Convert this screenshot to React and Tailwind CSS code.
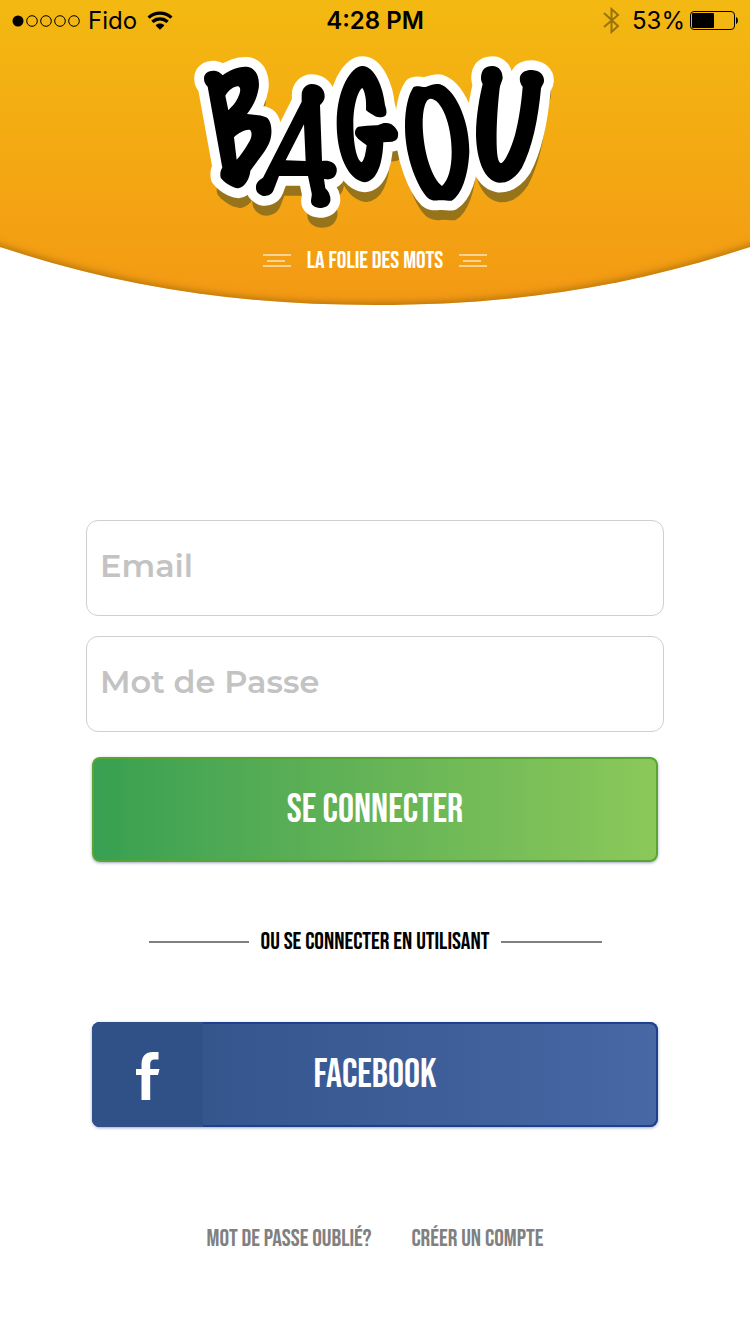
import React from "react";

const condensed =
  "font-['Bebas_Neue','Roboto_Condensed','Liberation_Sans_Narrow','Liberation_Sans',sans-serif]";

function StatusBar() {
  return (
    <div className="grid w-full grid-cols-3 items-center px-3 pt-px text-2xl leading-10 text-black font-[Inter,sans-serif]">
      <div className="flex items-center gap-2">
        <svg width="68" height="12" viewBox="0 0 68 12" aria-hidden="true">
          <circle cx="6" cy="6" r="5.5" />
          <g fill="none" stroke="#000" strokeWidth="1">
            <circle cx="20" cy="6" r="5.3" />
            <circle cx="34" cy="6" r="5.3" />
            <circle cx="48" cy="6" r="5.3" />
            <circle cx="62" cy="6" r="5.3" />
          </g>
        </svg>
        <span>Fido</span>
        <svg className="ml-0.5" width="26" height="20" viewBox="0 0 26 20" aria-hidden="true">
          <g fill="none" stroke="#000" strokeWidth="3.2">
            <path d="M1.6 6.6C8 .6 18 .6 24.400 6.600" />
            <path d="M5.400 10.900C9.800 6.900 16.200 6.900 20.600 10.900" />
          </g>
          <path d="M8.600 14.400C11 12 15 12 17.400 14.400L13 18.800Z" />
        </svg>
      </div>
      <div className="text-center font-semibold">4:28 PM</div>
      <div className="flex items-center justify-end">
        <svg className="mr-3" width="17" height="28" viewBox="0 0 17 28" fill="none" stroke="#98730c" strokeWidth="2" aria-hidden="true">
          <path d="M1 6L15 19L8.500 25V2L15 8L1 20" />
        </svg>
        <span>53%</span>
        <svg className="ml-1" width="49" height="20" viewBox="0 0 49 20" aria-hidden="true">
          <rect x="1.5" y=".5" width="44" height="18" rx="3.500" fill="none" stroke="#000" strokeWidth="1" />
          <rect x="3" y="2" width="22" height="15" rx="1" />
          <path d="M47 6C49.500 6.500 49.500 12.500 47 13Z" />
        </svg>
      </div>
    </div>
  );
}

function Logo() {
  return (
    <svg className="w-[380px] max-w-full" viewBox="0 0 1140 570" role="img" aria-label="Bagou">
      <defs>
        <g id="bagou" strokeLinejoin="round">
          <path d="M57 100C57 85 70 76 88 77C102 79 109 86 113 91C135 74 165 62 190 66C215 72 225 100 221 130C215 165 200 190 186 207C215 210 238 211 248 220C262 235 262 270 254 290C243 320 210 355 196 378C194 400 180 427 160 430C140 428 115 410 107 398C104 385 107 375 112 368L68 125C60 118 57 110 57 100ZM121 152C130 135 150 122 160 124C170 130 165 145 158 160C148 180 135 190 130 196ZM147 277C160 265 180 252 195 255C203 262 200 280 190 295C178 315 165 335 155 344Z" />
          <path d="M350 150C350 130 365 117 380 117C405 117 420 135 419 155C418 168 410 175 405 180L411 348C430 345 450 350 455 370C458 390 445 405 425 403L417 402L421 430C432 440 438 455 436 468C432 483 420 489 405 489C388 488 378 480 378 468C379 455 382 450 379 440L369 393L282 393L266 435C260 450 245 455 232 452C215 445 212 435 213 423C215 410 225 403 234 398L350 170ZM357 238L302 346L362 348Z" />
          <path d="M532 63C500 63 455 130 455 235C455 330 490 405 538 412C570 410 592 370 595 292L622 290C637 287 641 278 639 262C632 245 620 235 605 234C590 233 585 240 575 241C555 242 535 243 520 245C510 250 508 262 512 272C520 285 535 292 545 301C542 325 538 345 530 352C515 345 505 300 505 235C505 180 520 135 532 129C540 140 545 165 543 195C548 202 560 205 570 214C580 219 597 218 603 210C607 200 603 190 600 180C595 130 570 63 532 63Z" />
          <path d="M685 127C695 120 712 127 722 126C735 122 750 114 765 118C805 130 853 215 853 320C850 390 830 450 800 467C790 468 775 464 760 466C745 468 735 464 728 458C700 430 660 340 660 245C660 190 670 150 685 127ZM735 161C722 163 713 190 713 240C715 320 740 400 771 423C790 405 800 370 800 320C800 240 770 160 735 161Z" />
          <path d="M888 100C888 75 900 63 922 63C942 64 953 78 953 100C951 110 946 117 944 130C936 200 934 260 935 300C936 335 940 352 948 355C958 352 975 320 990 270C1003 220 1010 165 1013 125C1006 118 1003 105 1005 95C1010 80 1025 74 1042 75C1065 77 1078 90 1077 108C1077 117 1070 122 1068 130C1060 220 1042 310 1010 370C990 400 970 414 942 413C900 408 875 350 873 270C873 210 885 150 893 117C889 110 888 105 888 100Z" />
        </g>
      </defs>
      <use href="#bagou" x="5" y="43" fill="#97731a" stroke="#97731a" strokeWidth="32" />
      <use href="#bagou" fill="#fff" stroke="#fff" strokeWidth="59" />
      <path d="M700 150H780L830 300L770 440L705 300ZM930 120L980 100L1025 130L1000 300L940 370Z" fill="#fff" />
      <use href="#bagou" fill="#000" fillRule="evenodd" />
    </svg>
  );
}

function HeaderShape() {
  return (
    <svg className="absolute inset-0 -z-10 h-full w-full" viewBox="0 0 750 305" preserveAspectRatio="none" aria-hidden="true">
      <defs>
        <linearGradient id="sun" x1="0" y1="0" x2="0" y2="1">
          <stop offset="0" stopColor="#f3b911" />
          <stop offset="1" stopColor="#f39914" />
        </linearGradient>
        <clipPath id="bowl">
          <path d="M0 0H750V247C625 288 510 305 375 305S125 288 0 247Z" />
        </clipPath>
        <filter id="soft" x="-10%" y="-50%" width="120%" height="200%">
          <feGaussianBlur stdDeviation="4" />
        </filter>
      </defs>
      <g clipPath="url(#bowl)">
        <rect width="750" height="305" fill="url(#sun)" />
        <path d="M-30 238L0 247C125 288 240 305 375 305S625 288 750 247L780 238" transform="translate(0 3)" fill="none" stroke="#8a5a08" strokeOpacity="0.75" strokeWidth="8" filter="url(#soft)" />
      </g>
    </svg>
  );
}

function Flourish() {
  return (
    <svg width="28" height="14" viewBox="0 0 28 14" stroke="#fff" strokeOpacity="0.55" strokeWidth="2" aria-hidden="true">
      <path d="M0 1H28M4 7H22M0 12H28" />
    </svg>
  );
}

function Field({ id, label, type }) {
  return (
    <input
      id={id}
      type={type}
      aria-label={label}
      placeholder={label}
      className="h-24 w-full rounded-xl border border-[#cfcfcf] bg-white px-[13px] pb-1.5 text-[32px] font-semibold text-gray-700 outline-none placeholder:text-[#c3c3c3] font-[Montserrat,Inter,sans-serif]"
    />
  );
}

export default function App() {
  return (
    <div className={`min-h-screen bg-white ${condensed}`}>
      <header className="relative isolate flex h-[305px] flex-col items-center">
        <HeaderShape />
        <StatusBar />
        <div className="mt-1 flex h-[190px] max-w-full justify-center">
          <Logo />
        </div>
        <div className="mt-2.5 flex items-center gap-4 text-2xl leading-8 text-white">
          <Flourish />
          <p>LA FOLIE DES MOTS</p>
          <Flourish />
        </div>
      </header>

      <main className="mx-auto flex w-full max-w-[626px] flex-col items-center px-6 pt-[215px] pb-16">
        <form className="flex w-full flex-col gap-5" onSubmit={(e) => e.preventDefault()}>
          <Field id="email" label="Email" type="email" />
          <Field id="password" label="Mot de Passe" type="password" />
          <div className="mt-[5px] px-1.5">
            <button
              type="submit"
              className="h-[105px] w-full rounded-lg border-2 border-[#5aa52f] bg-linear-to-r from-[#37a052] to-[#8bc85a] text-[40px] text-white shadow-[0_1px_3px_rgba(60,80,150,0.5)]"
            >
              SE CONNECTER
            </button>
          </div>
        </form>

        <div className="mt-16 flex w-full max-w-[453px] items-center gap-3 text-2xl leading-8 text-black">
          <span className="h-0.5 flex-1 bg-[#808080]" />
          <p>OU SE CONNECTER EN UTILISANT</p>
          <span className="h-0.5 flex-1 bg-[#808080]" />
        </div>

        <div className="mt-16 w-full px-1.5">
          <button
            type="button"
            className="relative flex h-[105px] w-full items-center justify-center overflow-hidden rounded-lg bg-linear-to-r from-[#305187] to-[#4767a5] text-[40px] text-white shadow-[inset_0_0_0_2px_#1d418f,0_1px_3px_rgba(60,80,150,0.5)]"
          >
            <span className="absolute inset-y-0 left-0 flex w-[111px] items-center justify-center bg-[#305187] pt-0.5">
              <svg width="24" height="48" viewBox="0 0 24 48" fill="#fff" aria-hidden="true">
                <path d="M5.500 48V23H0V17H5.500V13C5.500 4 9.500 0 17 0H22.500V7.500H19C15.500 7.500 14.200 9 14.200 13V17H23.500L22 23H14.200V48Z" />
              </svg>
            </span>
            FACEBOOK
          </button>
        </div>

        <nav className="mt-24 flex gap-10 text-2xl leading-8 text-[#808080]">
          <a href="#oublie">MOT DE PASSE OUBLIÉ?</a>
          <a href="#compte">CRÉER UN COMPTE</a>
        </nav>
      </main>
    </div>
  );
}
